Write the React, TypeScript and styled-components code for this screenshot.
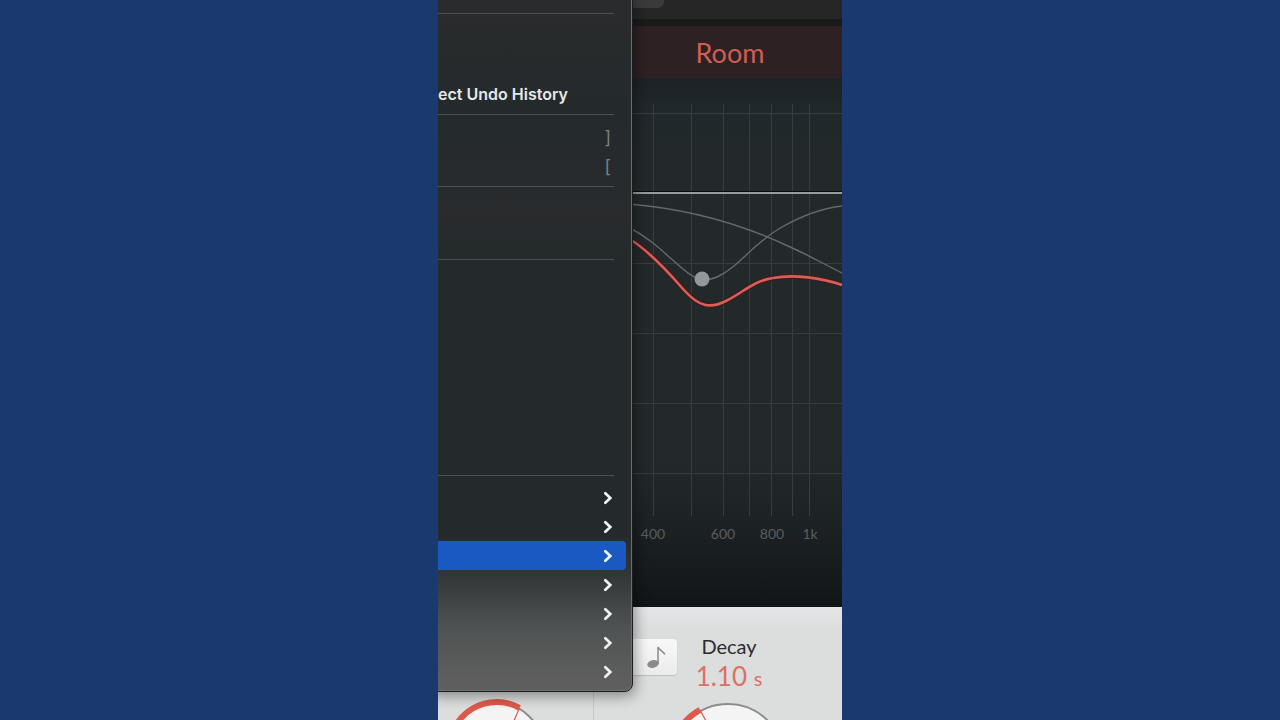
import React from "react";
import styled, { createGlobalStyle } from "styled-components";

const Global = createGlobalStyle`
  *, *::before, *::after { box-sizing: border-box; }
  body { margin: 0; background: #1a3a6f; }
`;

const Stage = styled.main`
  display: flex;
  justify-content: center;
  min-height: 100vh;
  background: #1a3a6f;
`;

const Clip = styled.div`
  position: relative;
  width: min(100%, 404px);
  min-height: 100vh;
  overflow: hidden;
  background: #dcdddd;
`;

const Plugin = styled.section`
  display: flex;
  flex-direction: column;
`;

const TitleBar = styled.div`
  height: 26px;
  padding-left: 180px;
  background: #262626;
  border-bottom: 7px solid #1a1a1b;
`;

const TitleTab = styled.div`
  width: 46px;
  height: 8px;
  background: #3a3a3a;
  border-radius: 0 0 6px 0;
`;

const BandHeader = styled.h1`
  margin: 0;
  padding-left: 180px;
  height: 52px;
  font: 400 27px/54px Lato, sans-serif;
  text-align: center;
  color: #cf5f53;
  background: #2d2123;
`;

const Graph = styled.svg`
  display: block;
  width: 100%;
  height: auto;
  background: linear-gradient(#1c2226 0, #20282b 30px, #23292b 90px, #23292b 380px, #1c2124 450px, #111517 529px);
`;

const AxisLabel = styled.text`
  font: 400 14px Lato, sans-serif;
  fill: #595d5f;
  text-anchor: middle;
`;

const Controls = styled.div`
  display: flex;
  height: 113px;
  background: linear-gradient(#e4e6e7, #dcdddd 24px);
`;

const ControlCell = styled.div<{ $width?: number }>`
  position: relative;
  flex: ${(p) => (p.$width ? `0 0 ${p.$width}px` : "1")};
  display: flex;
  flex-direction: column;
  align-items: center;
  padding-top: 27px;
  border-right: ${(p) => (p.$width ? "1px solid #c6c7c8" : "none")};
`;

const SyncButton = styled.button`
  position: absolute;
  left: 35px;
  top: 32px;
  width: 48px;
  height: 36px;
  padding: 2px 0 0 8px;
  border: 0;
  border-radius: 4px;
  background: linear-gradient(#f8f8f8, #ececec);
  box-shadow: 0 1px 1px #00000026;
`;

const Readout = styled.div`
  width: 120px;
  margin-left: 22px;
  text-align: center;
`;

const ReadoutName = styled.div`
  font: 400 20px/24px Lato, sans-serif;
  color: #2c2c2d;
`;

const ReadoutValue = styled.output`
  display: block;
  font: 400 26px/36px Lato, sans-serif;
  color: #dc6f66;
`;

const Unit = styled.span`
  font-size: 20px;
`;

const Menu = styled.nav`
  position: absolute;
  left: -10px;
  top: -2px;
  width: 205px;
  height: 694px;
  padding: 14px 6px 0 8px;
  border: 1px solid #1b1d1e;
  border-radius: 0 0 8px 0;
  box-shadow: inset -1px -1px 0 #6b6f70, 2px 4px 14px #00000066;
  background: linear-gradient(#2a2b2c 0, #242a2c 110px, #292b2d 215px, #242a2b 260px, #242a2c 535px, #323637 575px, #505353 630px, #5e5e5e 680px);
`;

const MenuGroup = styled.div<{ $height: number; $pad?: number }>`
  height: ${(p) => p.$height}px;
  padding-top: ${(p) => p.$pad ?? 8}px;
  margin-right: 12px;
  border-top: 1px solid #4c5152;
`;

const MenuItem = styled.button<{ $active?: boolean }>`
  display: flex;
  align-items: center;
  justify-content: space-between;
  width: calc(100% + 12px);
  height: 29px;
  padding: 0 13px 0 0;
  border: 0;
  border-radius: 0 4px 4px 0;
  background: ${(p) => (p.$active ? "#1b59c2" : "transparent")};
  color: #e6e8e8;
  font: 600 16px/29px Inter, sans-serif;
  white-space: nowrap;
`;

const MenuLabel = styled.span`
  padding-left: 1px;
`;

const Shortcut = styled.kbd`
  margin-left: auto;
  padding-right: 2px;
  font: 400 18px/29px Inter, sans-serif;
  color: #7b8081;
`;

const Arrow = styled.svg`
  margin-left: auto;
  width: 10px;
  height: 14px;
`;

const Knob = styled.svg`
  position: absolute;
  left: 0;
  bottom: 0;
  width: 100%;
  height: 24px;
`;

const verticals = [215, 253, 285, 311, 333, 354, 371];
const horizontals = [35, 185, 255, 325, 395];
const labels = [
  { x: 215, text: "400" },
  { x: 285, text: "600" },
  { x: 334, text: "800" },
  { x: 372, text: "1k" },
];
const decayCurve =
  "M190 160C207 170 226 189 245 211C261 229 272 231 288 223C306 214 315 203 335 200C356 196 384 200 404 207";

function EqGraph() {
  return (
    <Graph viewBox="0 0 404 529" role="img" aria-label="Decay rate curve">
      <g stroke="#363d3f" strokeWidth="1">
        {verticals.map((x) => <path key={x} d={`M${x}.5 26V438`} />)}
        {horizontals.map((y) => <path key={y} d={`M190 ${y}.5H404`} />)}
      </g>
      <path d="M190 113.5H404" stroke="#090b0c" strokeWidth="1" />
      <path d="M190 115H404" stroke="#959c9b" strokeWidth="2" />
      <g fill="none" stroke="#646b6b" strokeWidth="1.4">
        <path d="M190 126C255 131 305 147 350 168C370 177 386 186 404 195" />
        <path d="M190 149C214 161 228 177 245 191C256 201 268 204 279 199C301 189 314 166 344 149C367 136 386 130 404 128" />
      </g>
      <path d={decayCurve} fill="none" stroke="#3d1b1c" strokeWidth="5" />
      <path d={decayCurve} fill="none" stroke="#d65f58" strokeWidth="2.6" />
      <circle cx="264" cy="201" r="7.5" fill="#929899" />
      {labels.map((l) => <AxisLabel key={l.text} x={l.x} y="461">{l.text}</AxisLabel>)}
    </Graph>
  );
}

function Chevron() {
  return (
    <Arrow viewBox="0 0 10 14" aria-hidden="true">
      <path d="M2.3 2.200L7.300 7L2.300 11.800" fill="none" stroke="#f0f2f2" strokeWidth="2.700" strokeLinecap="round" strokeLinejoin="miter" />
    </Arrow>
  );
}

export default function App() {
  return (
    <>
      <Global />
      <Stage>
        <Clip>
          <Plugin>
            <TitleBar><TitleTab /></TitleBar>
            <BandHeader>Room</BandHeader>
            <EqGraph />
            <Controls>
              <ControlCell $width={156}>
                <Knob viewBox="0 0 156 24" preserveAspectRatio="xMinYMin meet" aria-hidden="true">
                  <circle cx="59" cy="53.5" r="46.5" fill="#f4f4f4" stroke="#8b8c8d" strokeWidth="2" />
                  <path d="M11.5 53.5A47.5 47.5 0 0 1 82 11.900" fill="none" stroke="#dc5a4b" strokeWidth="6" />
                  <path d="M82 12L76 26" stroke="#dc5a4b" strokeWidth="1.2" />
                </Knob>
              </ControlCell>
              <ControlCell>
                <SyncButton aria-label="Sync to tempo">
                  <svg width="20" height="24" viewBox="0 0 20 24" aria-hidden="true">
                    <ellipse cx="6" cy="19" rx="5.800" ry="3.800" fill="#8b8b8b" transform="rotate(-12 6 19)" />
                    <path d="M11 19V2C12 5 16 6 18 9.500" fill="none" stroke="#8b8b8b" strokeWidth="1.5" />
                  </svg>
                </SyncButton>
                <Readout>
                  <ReadoutName>Decay</ReadoutName>
                  <ReadoutValue>1.10 <Unit>s</Unit></ReadoutValue>
                </Readout>
                <Knob viewBox="0 0 248 24" preserveAspectRatio="xMinYMin meet" aria-hidden="true">
                  <circle cx="134" cy="64" r="56" fill="#f4f4f4" stroke="#8b8c8d" strokeWidth="2" />
                  <path d="M84 35.700A57.5 57.5 0 0 1 106 13.800" fill="none" stroke="#dc5a4b" strokeWidth="6" />
                  <path d="M106 14L112 25" stroke="#dc5a4b" strokeWidth="1.2" />
                </Knob>
              </ControlCell>
            </Controls>
          </Plugin>
          <Menu aria-label="Edit">
            <MenuGroup $height={101} $pad={66}>
              <MenuItem><MenuLabel>ect Undo History</MenuLabel></MenuItem>
            </MenuGroup>
            <MenuGroup $height={72}>
              <MenuItem aria-label="Next"><Shortcut>]</Shortcut></MenuItem>
              <MenuItem aria-label="Previous"><Shortcut>[</Shortcut></MenuItem>
            </MenuGroup>
            <MenuGroup $height={73} />
            <MenuGroup $height={216} />
            <MenuGroup $height={210} $pad={7}>
              {[0, 1, 2, 3, 4, 5, 6].map((i) => (
                <MenuItem key={i} $active={i === 2} aria-label={`Submenu ${i + 1}`}><Chevron /></MenuItem>
              ))}
            </MenuGroup>
          </Menu>
        </Clip>
      </Stage>
    </>
  );
}
